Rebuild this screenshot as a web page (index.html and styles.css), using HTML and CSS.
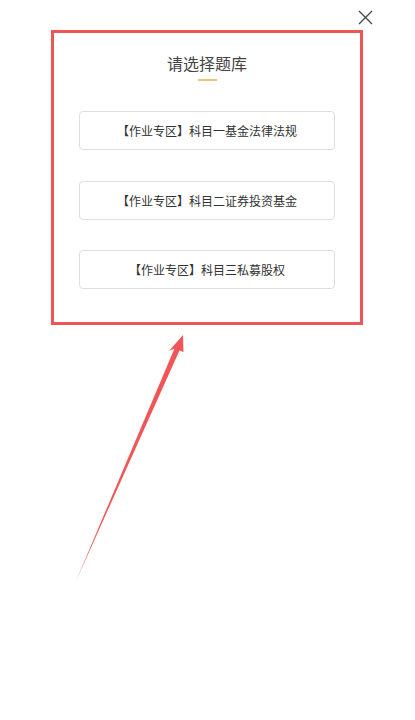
FILE: index.html
```html
<!DOCTYPE html>
<html lang="zh-CN">
<head>
<meta charset="utf-8">
<title>请选择题库</title>
<link rel="stylesheet" href="styles.css">
</head>
<body>
<div class="page">
  <button class="close" aria-label="关闭">
    <svg width="15" height="15" viewBox="0 0 15 15"><path d="M1 1L14 14M14 1L1 14" stroke="#444" stroke-width="1.3" fill="none"/></svg>
  </button>
  <section class="dialog">
    <h1 class="title">请选择题库</h1>
    <div class="underline"></div>
    <div class="list">
      <div class="item">【作业专区】科目一基金法律法规</div>
      <div class="item">【作业专区】科目二证券投资基金</div>
      <div class="item">【作业专区】科目三私募股权</div>
    </div>
  </section>
  <svg class="arrow" width="415" height="720" viewBox="0 0 415 720">
    <polygon points="183,335 169,351 174.5,348.5 76,581 179.5,350.5 183.5,352" fill="#f25555"/>
  </svg>
</div>
</body>
</html>
```
FILE: styles.css
```css
* { box-sizing: border-box; }
html, body { margin: 0; padding: 0; background: #fff; }
body {
  font-family: "Noto Sans CJK SC", "Noto Sans", sans-serif;
  width: 415px;
  height: 720px;
  overflow: hidden;
}
.page {
  position: relative;
  width: 415px;
  height: 720px;
  padding-top: 30px;
  padding-left: 51px;
}
.close {
  position: absolute;
  left: 358px;
  top: 10px;
  width: 15px;
  height: 15px;
  padding: 0;
  border: 0;
  background: none;
  display: block;
}
.close svg { display: block; }
.dialog {
  width: 312px;
  height: 295px;
  border: 3px solid #f05454;
  background: #fff;
  padding: 19px 25px 0;
  display: flex;
  flex-direction: column;
  align-items: center;
}
.title {
  margin: 0;
  font-size: 16px;
  line-height: 22px;
  font-weight: normal;
  color: #444;
}
.underline {
  width: 19px;
  height: 2px;
  margin-top: 5px;
  background: #e9c77c;
}
.list {
  width: 100%;
  margin-top: 30px;
  display: flex;
  flex-direction: column;
  gap: 30.5px;
}
.item {
  height: 39px;
  border: 1px solid #dedede;
  border-radius: 4px;
  background: #fff;
  font-size: 12px;
  color: #333;
  display: flex;
  align-items: center;
  justify-content: center;
}
.arrow {
  position: absolute;
  left: 0;
  top: 0;
  pointer-events: none;
}
```
